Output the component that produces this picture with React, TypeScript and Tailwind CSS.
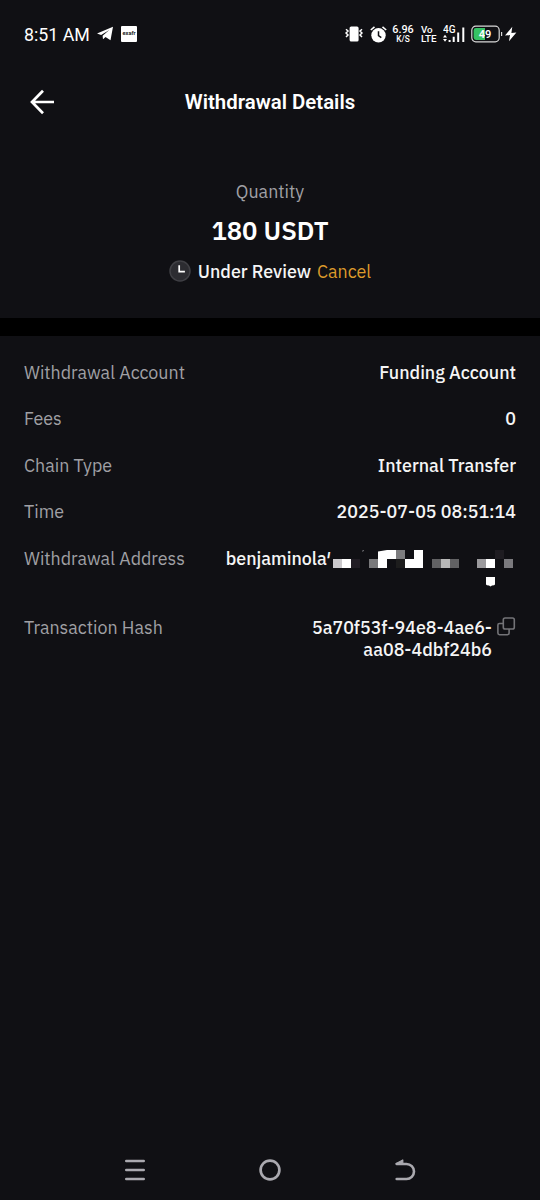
type Detail = {
    label: string;
    value: string;
};

const DETAILS: Detail[] = [
    { label: "Withdrawal Account", value: "Funding Account" },
    { label: "Fees", value: "0" },
    { label: "Chain Type", value: "Internal Transfer" },
    { label: "Time", value: "2025-07-05 08:51:14" },
];

// x, y, width, fill
const MOSAIC: [number, number, number, string][] = [
    [45, 0, 18, "#ffffff"],
    [63, 0, 9, "#7d7d7f"],
    [81, 0, 9, "#ffffff"],
    [162, 0, 9, "#1e1c21"],
    [0, 9, 9, "#cbc9cc"],
    [9, 9, 9, "#ffffff"],
    [18, 9, 9, "#211d24"],
    [36, 9, 9, "#79797b"],
    [45, 9, 9, "#ffffff"],
    [63, 9, 9, "#1d1d1d"],
    [72, 9, 18, "#ffffff"],
    [99, 9, 9, "#626264"],
    [108, 9, 9, "#b8b8b8"],
    [117, 9, 9, "#626264"],
    [144, 9, 9, "#9b9a9d"],
    [153, 9, 9, "#ffffff"],
    [171, 9, 9, "#7b7a7e"],
];

function StatusBar() {
    return (
        <header className="flex h-[68px] items-center pl-6 pr-[23px] font-[Roboto,sans-serif] text-white">
            <span className="w-[66px] whitespace-nowrap pt-px text-[17.8px] leading-none">8:51 AM</span>
            <svg className="ml-[7px]" width="16" height="16" viewBox="0 0 16 16" fill="currentColor">
                <path d="M0 7.6 16 .7 13.5 14.3 8.5 11 6 13.2 5.6 9.7 12.3 4 4.1 9.1Z" />
            </svg>
            <span className="ml-2 flex h-4 w-4 items-center justify-center rounded-[1px] bg-white text-[5.6px] font-bold leading-none text-[#222]">
                exafr
            </span>

            <div className="ml-auto flex items-center">
                <svg width="18" height="16" viewBox="0 0 18 16" fill="none" stroke="currentColor" strokeWidth="1.5">
                    <rect x="4.6" y=".5" width="9" height="15" rx="1.6" fill="currentColor" stroke="none" />
                    <path d="M1 3.3 3 5 1 7 3 9 1 11M17 3.3 15 5 17 7 15 9 17 11" />
                </svg>
                <svg className="ml-[7px]" width="17" height="17" viewBox="0 0 17 17" fill="none">
                    <circle cx="8.5" cy="9.3" r="7.2" fill="currentColor" />
                    <path d="M.8 4 4.5.9M16.2 4 12.5.9" stroke="currentColor" strokeWidth="1.6" />
                    <path d="M8.5 5.2v4.4l2.8 2" stroke="#101014" strokeWidth="1.5" />
                </svg>
                <div className="ml-[5px] w-[22px] text-center font-medium">
                    <div className="text-[10.8px] leading-[10px]">6.96</div>
                    <div className="text-[8.3px] leading-[8px]">K/S</div>
                </div>
                <div className="ml-[7px] w-[17px] text-[9.8px] font-medium leading-[9px]">
                    <div>Vo</div>
                    <div>LTE</div>
                </div>
                <svg className="ml-[5px]" width="22" height="20" viewBox="0 0 22 20" fill="currentColor">
                    <text x="0" y="9.2" fontSize="10" fontWeight="500">4G</text>
                    <path d="M0 13.5 2 10.8 4 13.5ZM0 15 4 15 2 17.8ZM5.6 16h2v2h-2ZM9.7 12.8h2V18h-2ZM14.2 8.6h2V18h-2ZM19.3 3.6h2V18h-2Z" />
                </svg>
                <svg className="ml-[6px]" width="32" height="18" viewBox="0 0 32 18" fill="none">
                    <rect x=".8" y="1.2" width="27.4" height="15.6" rx="4" stroke="#d8d8d8" strokeWidth="1.2" />
                    <path d="M5 3h9v12H5a2.4 2.4 0 0 1-2.4-2.4V5.4A2.4 2.4 0 0 1 5 3Z" fill="#35c264" />
                    <path d="M30.6 7v4" stroke="#d8d8d8" strokeWidth="1.2" />
                    <text x="14" y="13" textAnchor="middle" fontSize="11" fontWeight="600" fill="#fff">49</text>
                </svg>
                <svg className="ml-[2px]" width="12" height="16" viewBox="0 0 12 16" fill="currentColor">
                    <path d="M7.3.8 0 9.5 5 9 4 15.2 11.4 6.4 6.4 6.9Z" />
                </svg>
            </div>
        </header>
    );
}

function TitleBar() {
    return (
        <div className="grid h-[68px] grid-cols-[1fr_auto_1fr] items-center px-[30px] text-white">
            <svg width="25" height="26" viewBox="0 0 25 26" fill="none" stroke="currentColor" strokeWidth="2.7">
                <path d="M13 1.8 2 13 13 24.2M2 13H24" />
            </svg>
            <h1 className="pt-px font-[Roboto,sans-serif] text-[20.4px] font-semibold leading-none">Withdrawal Details</h1>
        </div>
    );
}

function Summary() {
    return (
        <section className="flex h-[182px] flex-col items-center pt-[44px]">
            <p className="text-[17.85px] leading-6 text-[#a0a0a5]">Quantity</p>
            <p className="mt-[11px] text-[25.6px] font-semibold leading-8 text-white">180 USDT</p>
            <div className="mt-[13px] flex items-center text-[17.85px] leading-6">
                <svg className="-mt-[2px]" width="22" height="22" viewBox="0 0 22 22" fill="none">
                    <circle cx="11" cy="11" r="10" fill="#2c2c31" stroke="#404045" strokeWidth="1.5" />
                    <path d="M10.2 5.3v6.3h5.7" stroke="#fff" strokeWidth="1.7" />
                </svg>
                <span className="ml-[7px] font-medium text-[#f5f5f5]">Under Review</span>
                <span className="ml-[6px] text-[#dd9b2b]">Cancel</span>
            </div>
        </section>
    );
}

function Redacted() {
    return (
        <svg className="mt-[2px] ml-[2px] shrink-0" width="184" height="38" viewBox="0 0 184 38">
            {MOSAIC.map(([x, y, w, fill]) => (
                <rect key={`${x}-${y}`} x={x} y={y} width={w} height="9" fill={fill} />
            ))}
            <path d="M45 0h9L45 1.6Z" fill="#101014" />
            <path d="M29 1.2 31 .5" stroke="#77777a" />
            <path d="M153 27h9v7.5q-.4 1-3 1l-1.5 1-1.5-1q-2.5 0-3-1Z" fill="#fff" />
        </svg>
    );
}

function DetailList() {
    return (
        <section className="flex flex-col gap-6 px-6 pt-[25.7px] text-[17.85px] leading-[22.5px]">
            {DETAILS.map((d) => (
                <div key={d.label} className="flex justify-between">
                    <span className="text-[#a0a0a5]">{d.label}</span>
                    <span className="font-medium text-[#f5f5f5]">{d.value}</span>
                </div>
            ))}
            <div className="flex h-[45px] items-start justify-between">
                <span className="text-[#a0a0a5]">Withdrawal Address</span>
                <div className="-mr-px flex items-start">
                    <span className="font-medium text-[#f5f5f5]">benjaminola′</span>
                    <Redacted />
                </div>
            </div>
            <div className="flex items-start justify-between">
                <span className="text-[#a0a0a5]">Transaction Hash</span>
                <div className="flex items-start">
                    <span className="text-right font-medium text-[#f5f5f5]">
                        5a70f53f-94e8-4ae6-
                        <br />
                        aa08-4dbf24b6
                    </span>
                    <svg className="ml-[5px]" width="19" height="19" viewBox="0 0 19 19" fill="none" stroke="#737377" strokeWidth="1.6">
                        <rect x="6.3" y="1" width="11" height="11" rx="1.8" />
                        <path d="M6.3 6.5H2.5A1.6 1.6 0 0 0 .9 8.1v8a1.6 1.6 0 0 0 1.6 1.6h8a1.6 1.6 0 0 0 1.6-1.6V12" />
                    </svg>
                </div>
            </div>
        </section>
    );
}

function NavBar() {
    return (
        <nav className="mt-auto grid h-[60px] grid-cols-3 items-center px-[67.5px] text-[#aaa9af]">
            <svg className="justify-self-center" width="22" height="22" viewBox="0 0 22 22" stroke="currentColor" strokeWidth="2.6" strokeLinecap="round">
                <path d="M2.3 2H19.7M2.3 11H19.7M2.3 20H19.7" />
            </svg>
            <svg className="justify-self-center" width="22" height="22" viewBox="0 0 22 22" fill="none" stroke="currentColor" strokeWidth="2.7">
                <circle cx="11" cy="11" r="9.4" />
            </svg>
            <svg className="justify-self-center" width="22" height="22" viewBox="0 0 22 22" fill="none" stroke="currentColor" strokeWidth="2.6" strokeLinecap="round">
                <path d="M2.7 5H12.5a7.5 7.5 0 0 1 0 15H2.7" />
                <path d="M2.2 4.5 8.8 1V5Z" fill="currentColor" strokeWidth="1.2" strokeLinejoin="round" />
            </svg>
        </nav>
    );
}

export default function App() {
    return (
        <main className="flex h-[1200px] w-[540px] flex-col overflow-hidden bg-[#101014] font-['IBM_Plex_Sans',Roboto,sans-serif]">
            <StatusBar />
            <TitleBar />
            <Summary />
            <div className="h-[18px] shrink-0 bg-black" />
            <DetailList />
            <NavBar />
        </main>
    );
}
